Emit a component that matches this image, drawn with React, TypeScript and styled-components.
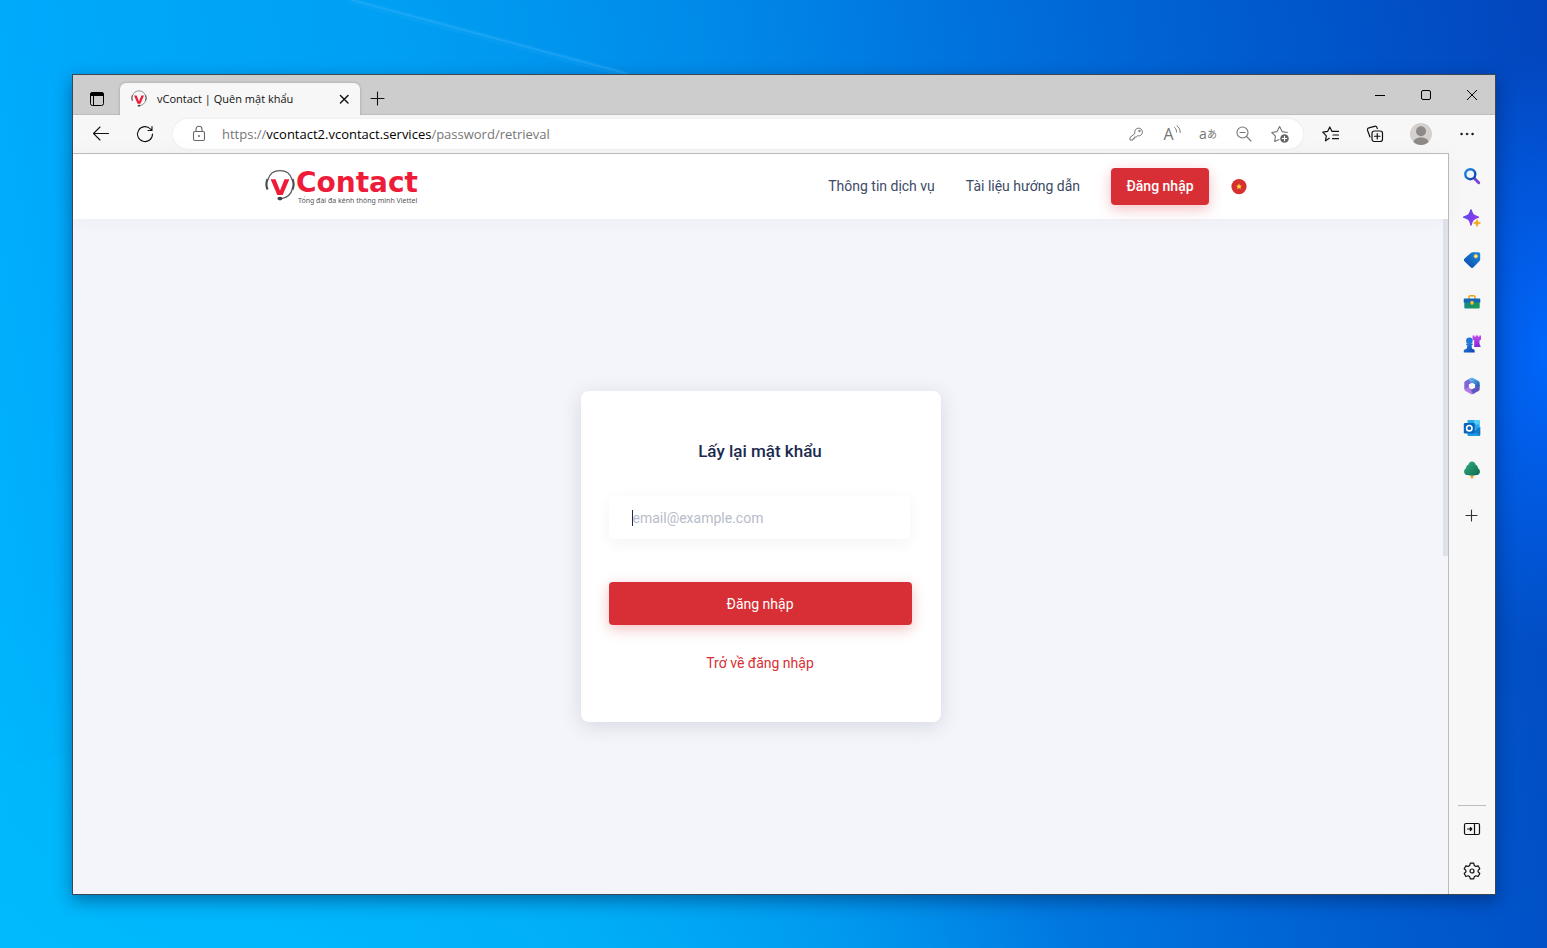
import React from "react";
import styled, { createGlobalStyle, css } from "styled-components";

const Global = createGlobalStyle`
  *, *::before, *::after { box-sizing: border-box; }
  body { margin: 0; font-family: Roboto, "Liberation Sans", sans-serif; }
  button { border: 0; padding: 0; background: none; color: inherit; font: inherit; cursor: pointer; }
  a { text-decoration: none; }
  svg { display: block; flex: none; }
`;

const chromeFont = `"Open Sans", "Noto Sans", sans-serif`;

const Desktop = styled.div`
  position: relative;
  display: flex;
  min-height: 100vh;
  padding: 74px 51px 53px 72px;
  overflow: hidden;
  background:
    radial-gradient(ellipse 120px 300px at 100% 37%, rgba(0, 104, 255, 0.95), rgba(0, 100, 250, 0) 100%),
    radial-gradient(ellipse 900px 420px at 12% 108%, rgba(0, 188, 255, 0.9), rgba(0, 184, 250, 0.6) 50%, rgba(0, 180, 250, 0) 100%),
    linear-gradient(80deg, #00b7fd 0%, #00aafb 10%, #009ff3 33%, #008be9 50%, #0078e0 62%, #0066d6 74%, #0056cb 86%, #0345bd 100%);
`;

const Rays = styled.svg`
  position: absolute;
  inset: 0;
  width: 100%;
  height: 100%;
`;

const Window = styled.div`
  position: relative;
  flex: 1;
  min-width: 0;
  display: flex;
  flex-direction: column;
  border: 1px solid #3b4754;
  background: #f7f7f7;
  box-shadow: 0 6px 16px rgba(0, 20, 60, 0.42);
`;

const TabStrip = styled.div`
  display: flex;
  align-items: flex-end;
  height: 40px;
  background: #cdcdcd;
  box-shadow: inset 0 -1px #bdbdbd;
`;

const IconButton = styled.button<{ $w?: number; $h?: number; $tone?: string }>`
  flex: none;
  display: flex;
  align-items: center;
  justify-content: center;
  width: ${(p) => p.$w ?? 36}px;
  height: ${(p) => p.$h ?? 30}px;
  color: ${(p) => p.$tone ?? "#111"};
`;

const Tab = styled.div`
  display: flex;
  align-items: center;
  width: 240px;
  height: 32px;
  padding: 0 4px 0 10px;
  border-radius: 6px 6px 0 0;
  background: #f7f7f7;
  font: 11px/16px ${chromeFont};
  color: #111;
  box-shadow: 0 0 3px rgba(0, 0, 0, 0.25);
  clip-path: inset(-3px -3px 0 -3px);
`;

const TabTitle = styled.span`
  flex: 1;
  margin-left: 9px;
  white-space: nowrap;
`;

const WindowControls = styled.div`
  display: flex;
  margin-left: auto;
`;

const Toolbar = styled.div`
  display: flex;
  align-items: center;
  height: 38px;
  padding: 0 6px;
`;

const AddressBar = styled.div`
  flex: 1;
  min-width: 0;
  display: flex;
  align-items: center;
  height: 30px;
  margin: 0 6px;
  padding: 0 5px 0 8px;
  border-radius: 15px;
  background: #fff;
  box-shadow: 0 0 3px rgba(0, 0, 0, 0.07);
`;

const Url = styled.span`
  flex: 1;
  margin-left: 5px;
  font: 13px/20px ${chromeFont};
  color: #767676;
  white-space: nowrap;
  b { font-weight: 400; color: #000; }
`;

const AddressIcon = styled.span`
  flex: none;
  display: flex;
  justify-content: center;
  width: 36px;
  color: #666;
`;

const TranslateGlyph = styled.span`
  display: flex;
  align-items: center;
  font: 14px/16px ${chromeFont};
  small { font: 10px/16px "Noto Sans CJK JP", sans-serif; }
`;

const ReadAloudGlyph = styled.span`
  display: flex;
  align-items: flex-start;
  font: 16px/18px ${chromeFont};
`;

const Workspace = styled.div`
  flex: 1;
  display: flex;
  min-height: 0;
`;

const Page = styled.div`
  position: relative;
  flex: 1;
  min-width: 0;
  display: flex;
  flex-direction: column;
  border: solid #bcbcbc;
  border-width: 1px 1px 0 0;
  background: #f4f5fa;
`;

const SiteHeader = styled.header`
  height: 65px;
  background: #fff;
  box-shadow: 0 0 20px rgba(50, 60, 100, 0.04);
`;

const HeaderInner = styled.div`
  display: flex;
  align-items: center;
  justify-content: space-between;
  max-width: 991px;
  height: 100%;
  margin: 0 auto;
  padding-right: 9px;
`;

const Logo = styled.a`
  display: flex;
  color: #ee1c38;
`;

const LogoText = styled.span`
  display: flex;
  flex-direction: column;
  margin-left: 1px;
  white-space: nowrap;
`;

const LogoName = styled.span`
  font: bold 28px/28px "DejaVu Sans", sans-serif;
`;

const LogoTagline = styled.span`
  padding-left: 2px;
  font: 7px/8px "Noto Sans", sans-serif;
  color: #55565a;
`;

const Nav = styled.nav`
  display: flex;
  align-items: center;
`;

const NavLink = styled.a`
  margin-right: 31px;
  padding-bottom: 2px;
  font-size: 14px;
  line-height: 20px;
  color: #3b4a68;
  white-space: nowrap;
`;

const redButton = css`
  display: flex;
  align-items: center;
  justify-content: center;
  border-radius: 4px;
  background: #d72f35;
  color: #fff;
  font-size: 14px;
  line-height: 20px;
  box-shadow: 0 4px 14px rgba(215, 47, 53, 0.3);
`;

const LoginLink = styled.a`
  ${redButton}
  width: 98px;
  height: 37px;
  margin-right: 22px;
  padding-bottom: 2px;
  font-weight: 500;
`;

const SiteMain = styled.main`
  flex: 1;
  display: flex;
  align-items: center;
  justify-content: center;
`;

const Card = styled.form`
  display: flex;
  flex-direction: column;
  width: 360px;
  padding: 48px 29px 49px 28px;
  border-radius: 8px;
  background: #fff;
  box-shadow: 0 4px 20px rgba(40, 50, 90, 0.15);
`;

const CardTitle = styled.h1`
  margin: 0 0 33px;
  font-size: 17px;
  line-height: 24px;
  font-weight: 500;
  text-align: center;
  color: #1c2b4f;
`;

const EmailBox = styled.label`
  display: flex;
  align-items: center;
  height: 43px;
  margin: 0 2px 43px 0;
  padding: 0 23px;
  border-radius: 5px;
  background: #fff;
  box-shadow: 0 4px 16px rgba(40, 40, 60, 0.05);
`;

const Caret = styled.span`
  flex: none;
  width: 1px;
  height: 16px;
  background: #1c2b4f;
`;

const EmailInput = styled.input`
  flex: 1;
  min-width: 0;
  padding: 0;
  border: 0;
  outline: 0;
  background: none;
  font: 14px/20px Roboto, sans-serif;
  color: #1c2b4f;
  &::placeholder { color: #b7bcc9; opacity: 1; }
`;

const SubmitButton = styled.button`
  ${redButton}
  height: 43px;
`;

const BackLink = styled.a`
  margin: 28px auto 0;
  font-size: 14px;
  line-height: 20px;
  color: #d72f35;
`;

const ScrollThumb = styled.div`
  position: absolute;
  top: 65px;
  right: 0;
  width: 5px;
  height: 337px;
  background: #dfe1e8;
`;

const Sidebar = styled.aside`
  display: flex;
  flex-direction: column;
  align-items: center;
  width: 46px;
  padding: 2px 0;
`;

const SidebarFooter = styled.div`
  display: flex;
  flex-direction: column;
  margin-top: auto;
  padding-top: 2px;
  border-top: 1px solid #bdbdbd;
`;

const GradientDefs = styled.svg`
  position: absolute;
`;

type LineProps = { size?: number; w?: number; children: React.ReactNode };
const Line = ({ size = 18, w = 1.1, children }: LineProps) => (
  <svg width={size} height={size} viewBox="0 0 18 18" fill="none" stroke="currentColor" strokeWidth={w} strokeLinecap="round" strokeLinejoin="round">
    {children}
  </svg>
);
const Art = ({ children }: { children: React.ReactNode }) => (
  <svg width="18" height="18" viewBox="0 0 18 18">{children}</svg>
);

const Headset = ({ w, h }: { w: number; h: number }) => (
  <svg width={w} height={h} viewBox="0 0 30 34" fill="none">
    <path d="M3 10.500C4.500 5 9 1.600 15 1.600S25.500 5 27 10.500M27.300 20c-1.200 5-5 8.600-10.500 9.500" stroke="#55585d" strokeWidth="1.200" />
    <path d="M2.600 10C1.200 13 1.200 17.500 2.600 20.500M27.400 10c1.400 3 1.400 7.500 0 10.500" stroke="#4a4d52" strokeWidth="2.200" />
    <ellipse cx="15" cy="29.600" rx="2.600" ry="1.800" fill="#3f4247" />
    <path d="M5.600 10.300h4.900L15 21.500l4.500-11.200h4.900L17.700 26h-5.400z" fill="#ee1c38" />
  </svg>
);

const sidebarTools: { name: string; art: React.ReactNode }[] = [
  {
    name: "Search",
    art: (
      <Art>
        <path d="M11.500 11.500l4.200 4.200" stroke="#7a45d6" strokeWidth="3" strokeLinecap="round" />
        <circle cx="7.300" cy="7.200" r="5" fill="#eef6ff" stroke="url(#blue)" strokeWidth="2.400" />
      </Art>
    ),
  },
  {
    name: "Discover",
    art: (
      <Art>
        <path d="M8 .8c1.400 5 2.200 5.800 7.500 7.400C10.200 9.800 9.400 10.600 8 16 6.600 10.600 5.800 9.800.6 8.200 5.800 6.600 6.600 5.800 8 .8z" fill="url(#violet)" stroke="url(#violet)" strokeWidth="1.300" strokeLinejoin="round" />
        <path d="M14 10.500c.6 2.300 1 2.800 3.500 3.500-2.500.7-2.900 1.200-3.500 3.500-.6-2.300-1-2.800-3.500-3.500 2.500-.7 2.900-1.200 3.500-3.500z" fill="#f3a91b" stroke="#f3a91b" strokeWidth=".8" />
      </Art>
    ),
  },
  {
    name: "Shopping",
    art: (
      <Art>
        <path d="M9.800 1.200h5.600c1.200 0 1.800.7 1.800 1.800v5.200c0 .8-.3 1.400-.9 2l-5.800 6c-.9.900-2 .9-2.900 0l-6-5.700c-.9-.9-.9-2 0-2.900l6.200-5.700c.6-.5 1.200-.7 2-.7z" fill="url(#tag)" />
        <circle cx="12.800" cy="5.300" r="1.700" fill="#fff3b0" stroke="#f5b92c" strokeWidth="1" />
      </Art>
    ),
  },
  {
    name: "Tools",
    art: (
      <Art>
        <path d="M6 6V4c0-.8.500-1.200 1.200-1.200h3.600c.7 0 1.200.4 1.200 1.200v2" fill="none" stroke="#e7a51e" strokeWidth="1.500" />
        <rect x="1.300" y="8" width="15.400" height="7.600" rx="1" fill="url(#box)" />
        <path d="M2 5.400h14c.9 0 1.300.5 1.300 1.400v2.700H.7V6.800c0-.9.400-1.400 1.300-1.400z" fill="#1566b8" />
        <rect x="7.400" y="8" width="3.200" height="3.600" rx=".8" fill="#f7bd35" />
      </Art>
    ),
  },
  {
    name: "Games",
    art: (
      <Art>
        <path d="M9.600.4h1.900v1.400h1.200V.4h2.400v1.400h1.200V.4h1.700v4l-1.500 1.100v3.300l1.300 3.200h-6.600V5.500L9.600 4.400z" fill="url(#rook)" />
        <circle cx="6.400" cy="5.800" r="3.300" fill="#1e78d8" />
        <path d="M3.200 8.600h6.400v1.600H8.500l.5 3.200 2.600 1.500v2.500H.8v-2.500l3-1.500.6-3.200H3.200z" fill="url(#blue)" />
      </Art>
    ),
  },
  {
    name: "Microsoft 365",
    art: (
      <Art>
        <g fill="none" strokeWidth="4.600" strokeLinejoin="round">
          <path d="M8.500 3.200L3.600 6v6" stroke="#7d62d8" />
          <path d="M3.600 11.500V12L9 15.100l2-1.200" stroke="#b07be2" />
          <path d="M9 15.100l5.400-3.100V8" stroke="#5b57be" />
          <path d="M6.800 4.200L9 2.900 14.400 6v3.200" stroke="url(#loop)" />
        </g>
      </Art>
    ),
  },
  {
    name: "Outlook",
    art: (
      <Art>
        <path d="M5.500 1h10c.7 0 1.200.4 1.200 1.100V10H4.500V2c0-.6.400-1 1-1z" fill="#28a8ea" />
        <path d="M11 1h4.600c.7 0 1.100.4 1.100 1.100V5.500H11z" fill="#50d0fa" />
        <path d="M4.500 8l6.500 3 6.200-3v7.800c0 .8-.4 1.200-1.200 1.200H5.500c-.6 0-1-.4-1-1z" fill="#1a9be6" />
        <path d="M17.200 8L11 12.500l5.800 4c.3-.2.400-.5.400-.9z" fill="#1278c8" />
        <rect x=".8" y="4" width="11" height="10.400" rx="1.200" fill="#0a64bc" />
        <circle cx="6.300" cy="9.200" r="2.700" fill="none" stroke="#fff" strokeWidth="1.600" />
      </Art>
    ),
  },
  {
    name: "Tree",
    art: (
      <Art>
        <rect x="7.600" y="12" width="2.800" height="5.400" rx=".8" fill="#f2a530" />
        <path d="M9 .6c1.700 0 3 1.200 3.500 2.900 1.600.8 2.500 2.200 2.500 3.800 1.300.9 2 2.200 1.900 3.600-.1 2-1.700 3.200-3.600 3.100-2.800.7-5.800.7-8.600 0-1.900.1-3.500-1.100-3.600-3.100C1 9.500 1.700 8.200 3 7.300c0-1.600.9-3 2.500-3.800C6 1.800 7.300.6 9 .6z" fill="url(#tree)" />
      </Art>
    ),
  },
];

export default function App() {
  return (
    <Desktop>
      <Global />
      <GradientDefs width="0" height="0" aria-hidden="true">
        <defs>
          <linearGradient id="blue" x1="0" y1="0" x2="1" y2="1"><stop stopColor="#2a8be0" /><stop offset="1" stopColor="#0c3fae" /></linearGradient>
          <linearGradient id="violet" x1="0" y1="0" x2="1" y2="1"><stop stopColor="#4a4be8" /><stop offset="1" stopColor="#a534f0" /></linearGradient>
          <linearGradient id="rook" x1="0" y1="0" x2="0" y2="1"><stop stopColor="#c548ee" /><stop offset="1" stopColor="#8428d8" /></linearGradient>
          <linearGradient id="tag" x1="1" y1="0" x2="0" y2="1"><stop stopColor="#1a8be0" /><stop offset="1" stopColor="#0d48a8" /></linearGradient>
          <linearGradient id="box" x1="0" y1="0" x2="1" y2="0"><stop stopColor="#178a86" /><stop offset="1" stopColor="#1a9a50" /></linearGradient>
          <linearGradient id="loop" x1="0" y1="0" x2="1" y2="1"><stop stopColor="#62b4f4" /><stop offset="1" stopColor="#2468b8" /></linearGradient>
          <linearGradient id="tree" x1="0" y1="0" x2="1" y2="1"><stop stopColor="#36b07c" /><stop offset="1" stopColor="#0a6a55" /></linearGradient>
        </defs>
      </GradientDefs>
      <Rays viewBox="0 0 1547 948" preserveAspectRatio="none" aria-hidden="true">
        <path d="M0 768L100 745V948H0z" fill="#00c4ff" opacity=".12" />
        <path d="M348 0L624 74" stroke="#4abaff" strokeWidth="7" opacity=".1" />
        <path d="M352 0L628 74" stroke="#4abaff" strokeWidth="2" opacity=".28" />
      </Rays>
      <Window>
        <TabStrip>
          <IconButton aria-label="Tab actions" $w={47} $h={32}>
            <svg width="14" height="14" viewBox="0 0 14 14">
              <rect x=".5" y=".5" width="13" height="13" rx="2" fill="none" stroke="#000" />
              <path d="M0 4V2.500C0 1 1 0 2.500 0h9C13 0 14 1 14 2.500V4zM3 4h1v9.500H3z" fill="#000" />
            </svg>
          </IconButton>
          <Tab>
            <Headset w={18} h={18} />
            <TabTitle>vContact | Quên mật khẩu</TabTitle>
            <IconButton aria-label="Close tab" $w={24} $h={24}>
              <Line size={16} w={1.6}><path d="M5 5l8.500 8.500M13.500 5L5 13.500" /></Line>
            </IconButton>
          </Tab>
          <IconButton aria-label="New tab" $w={35} $h={32}>
            <Line><path d="M8.500 2v13M2 8.500h13" /></Line>
          </IconButton>
          <WindowControls>
            <IconButton aria-label="Minimize" $w={46} $h={40}>
              <svg width="10" height="10"><path d="M0 5.500h10" stroke="#000" /></svg>
            </IconButton>
            <IconButton aria-label="Maximize" $w={46} $h={40}>
              <svg width="10" height="10"><rect x=".5" y=".5" width="9" height="9" rx="1.500" fill="none" stroke="#000" /></svg>
            </IconButton>
            <IconButton aria-label="Close window" $w={46} $h={40}>
              <svg width="10" height="10"><path d="M0 0l10 10M10 0L0 10" stroke="#000" /></svg>
            </IconButton>
          </WindowControls>
        </TabStrip>
        <Toolbar>
          <IconButton aria-label="Back" $w={44}>
            <Line><path d="M16.500 8.500H1.500M8 2L1.500 8.500 8 15" /></Line>
          </IconButton>
          <IconButton aria-label="Refresh" $w={44}>
            <Line><path d="M16.500 9A7.500 7.500 0 1 1 14.500 4L16 5.500M16 1.500v4h-4" /></Line>
          </IconButton>
          <AddressBar>
            <AddressIcon>
              <Line>
                <rect x="3.500" y="6.500" width="11" height="9" rx="1.500" />
                <path d="M6 6.500V4.200a3 3 0 0 1 6 0v2.300" />
                <circle cx="9" cy="11" r=".4" fill="currentColor" />
              </Line>
            </AddressIcon>
            <Url>https://<b>vcontact2.vcontact.services</b>/password/retrieval</Url>
            <IconButton aria-label="Saved passwords" $tone="#767676">
              <Line w={1}>
                <path d="M7.800 8.200a3.900 3.900 0 1 1 2.700 2.600L9.200 12H7.500v1.600H6V15H3v-2.200z" />
                <circle cx="12.300" cy="6" r=".7" />
              </Line>
            </IconButton>
            <IconButton aria-label="Read aloud" $tone="#767676">
              <ReadAloudGlyph>
                A
                <svg width="7" height="10" viewBox="0 0 7 10" fill="none" stroke="currentColor" strokeLinecap="round">
                  <path d="M.6 2.500C2 3.500 2.500 5 2.500 7M3 .8c2.200 1.500 3.200 3.700 3.200 6.700" />
                </svg>
              </ReadAloudGlyph>
            </IconButton>
            <IconButton aria-label="Translate" $tone="#767676">
              <TranslateGlyph>a<small>あ</small></TranslateGlyph>
            </IconButton>
            <IconButton aria-label="Zoom out" $tone="#767676">
              <Line><circle cx="7.500" cy="7.500" r="5.500" /><path d="M11.500 11.500l4.500 4.500M5 7.500h5" /></Line>
            </IconButton>
            <IconButton aria-label="Add to favorites" $tone="#767676">
              <Line>
                <path d="M8 14.500l-4.300 2 .7-5.300L.8 7.500l5.200-.9L8.600 1.500l2.500 5.100 5.300.9" />
                <circle cx="13.500" cy="13.500" r="4.300" fill="#666" stroke="none" />
                <path d="M13.500 11.300v4.400M11.300 13.500h4.400" stroke="#fff" />
              </Line>
            </IconButton>
          </AddressBar>
          <IconButton aria-label="Favorites" $w={44}>
            <Line w={1.2}>
              <path d="M7.300 13.300L3.500 15.800l.8-5L.8 7.200l4.800-.8L7.800 2l2.200 4.400h6.500M11 10h5.500M10.500 13.700h6" />
            </Line>
          </IconButton>
          <IconButton aria-label="Collections" $w={44}>
            <Line w={1.2}>
              <rect x="6" y="6" width="10.500" height="10.500" rx="2.200" />
              <path d="M11.250 8.500v5.500M8.500 11.250H14M4 12L1.600 5.500c-.4-1.300 0-2.200 1.300-2.600l5.600-1.600c1.200-.3 2.100.1 2.500 1.300l.3 1" />
            </Line>
          </IconButton>
          <IconButton aria-label="Profile" $w={48}>
            <svg width="22" height="22" viewBox="0 0 22 22">
              <circle cx="11" cy="11" r="11" fill="#d3d0cd" />
              <circle cx="11" cy="8.200" r="5" fill="#8d8986" />
              <path d="M3.500 19c.5-3 3.500-4.500 7.500-4.500s7 1.500 7.500 4.500c-4 4-11 4-15 0z" fill="#8d8986" />
            </svg>
          </IconButton>
          <IconButton aria-label="More" $w={44}>
            <Line w={0.6}><g fill="currentColor"><circle cx="3.500" cy="9" r=".9" /><circle cx="9" cy="9" r=".9" /><circle cx="14.500" cy="9" r=".9" /></g></Line>
          </IconButton>
        </Toolbar>
        <Workspace>
          <Page>
            <SiteHeader>
              <HeaderInner>
                <Logo href="#" aria-label="vContact">
                  <Headset w={30} h={34} />
                  <LogoText>
                    <LogoName>Contact</LogoName>
                    <LogoTagline>Tổng đài đa kênh thông minh Viettel</LogoTagline>
                  </LogoText>
                </Logo>
                <Nav>
                  <NavLink href="#">Thông tin dịch vụ</NavLink>
                  <NavLink href="#">Tài liệu hướng dẫn</NavLink>
                  <LoginLink href="#">Đăng nhập</LoginLink>
                  <IconButton aria-label="Tiếng Việt" $w={16} $h={16}>
                    <svg width="16" height="16" viewBox="0 0 16 16">
                      <circle cx="8" cy="7.600" r="7.600" fill="#d5322f" />
                      <path d="M8 4.500l.8 2.100 2.200.1-1.700 1.400.6 2.200L8 9.100l-1.900 1.200.6-2.200L5 6.700l2.200-.1z" fill="#ffdf3a" />
                    </svg>
                  </IconButton>
                </Nav>
              </HeaderInner>
            </SiteHeader>
            <SiteMain>
              <Card>
                <CardTitle>Lấy lại mật khẩu</CardTitle>
                <EmailBox>
                  <Caret />
                  <EmailInput type="email" aria-label="Email" placeholder="email@example.com" />
                </EmailBox>
                <SubmitButton type="button">Đăng nhập</SubmitButton>
                <BackLink href="#">Trở về đăng nhập</BackLink>
              </Card>
            </SiteMain>
            <ScrollThumb />
          </Page>
          <Sidebar>
            {sidebarTools.map((t) => (
              <IconButton key={t.name} aria-label={t.name} $w={42} $h={42}>{t.art}</IconButton>
            ))}
            <IconButton aria-label="Customize" $w={42} $h={50} $tone="#333">
              <Line><path d="M8.500 3v11M3 8.500h11" /></Line>
            </IconButton>
            <SidebarFooter>
              <IconButton aria-label="Hide sidebar" $w={28} $h={42}>
                <Line w={1.2}><rect x="1.500" y="3.500" width="15" height="11" rx="1.500" /><path d="M11.500 3.500v11M4.500 9h4M7.300 7.500L8.800 9l-1.500 1.500z" /></Line>
              </IconButton>
              <IconButton aria-label="Settings" $w={28} $h={42}>
                <Line w={1.2}>
                  <circle cx="9" cy="9" r="2" />
                  <path d="M7.300 1.200h3.400l.6 2.300 1.500.9 2.300-.6 1.700 3-1.700 1.600v1.500l1.700 1.600-1.700 3-2.300-.7-1.500.9-.6 2.200H7.300l-.6-2.200-1.500-.9-2.300.7-1.700-3 1.700-1.600V8.400L1.200 6.800l1.700-3 2.300.6 1.500-.9z" />
                </Line>
              </IconButton>
            </SidebarFooter>
          </Sidebar>
        </Workspace>
      </Window>
    </Desktop>
  );
}
